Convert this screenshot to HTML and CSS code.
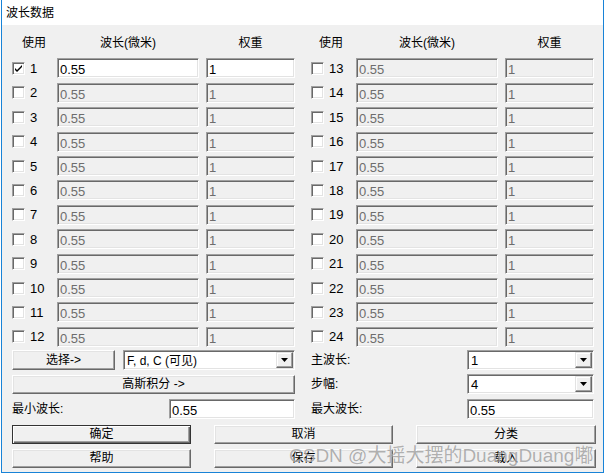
FILE: index.html
```html
<!DOCTYPE html>
<html>
<head>
<meta charset="utf-8">
<link rel="stylesheet" href="styles.css">
</head>
<body>
<div class="window">
  <div class="titlebar">波长数据</div>
  <div class="content">
    <div class="table">
      <div class="half">
        <div class="hdr hdr-use">使用</div><div class="hdr">波长(微米)</div><div class="hdr">权重</div>
        <div class="chk-cell"><span class="chk checked"><svg width="9" height="9" viewBox="0 0 9 9"><path d="M1 4 L3 6 L8 1 L8 3 L3 8 L1 6 Z" fill="#000"/></svg></span><span class="num">1</span></div><div class="field">0.55</div><div class="field">1</div>
        <div class="chk-cell"><span class="chk"></span><span class="num">2</span></div><div class="field dis">0.55</div><div class="field dis">1</div>
        <div class="chk-cell"><span class="chk"></span><span class="num">3</span></div><div class="field dis">0.55</div><div class="field dis">1</div>
        <div class="chk-cell"><span class="chk"></span><span class="num">4</span></div><div class="field dis">0.55</div><div class="field dis">1</div>
        <div class="chk-cell"><span class="chk"></span><span class="num">5</span></div><div class="field dis">0.55</div><div class="field dis">1</div>
        <div class="chk-cell"><span class="chk"></span><span class="num">6</span></div><div class="field dis">0.55</div><div class="field dis">1</div>
        <div class="chk-cell"><span class="chk"></span><span class="num">7</span></div><div class="field dis">0.55</div><div class="field dis">1</div>
        <div class="chk-cell"><span class="chk"></span><span class="num">8</span></div><div class="field dis">0.55</div><div class="field dis">1</div>
        <div class="chk-cell"><span class="chk"></span><span class="num">9</span></div><div class="field dis">0.55</div><div class="field dis">1</div>
        <div class="chk-cell"><span class="chk"></span><span class="num">10</span></div><div class="field dis">0.55</div><div class="field dis">1</div>
        <div class="chk-cell"><span class="chk"></span><span class="num">11</span></div><div class="field dis">0.55</div><div class="field dis">1</div>
        <div class="chk-cell"><span class="chk"></span><span class="num">12</span></div><div class="field dis">0.55</div><div class="field dis">1</div>
      </div>
      <div class="half">
        <div class="hdr hdr-use r">使用</div><div class="hdr">波长(微米)</div><div class="hdr">权重</div>
        <div class="chk-cell"><span class="chk"></span><span class="num">13</span></div><div class="field dis">0.55</div><div class="field dis">1</div>
        <div class="chk-cell"><span class="chk"></span><span class="num">14</span></div><div class="field dis">0.55</div><div class="field dis">1</div>
        <div class="chk-cell"><span class="chk"></span><span class="num">15</span></div><div class="field dis">0.55</div><div class="field dis">1</div>
        <div class="chk-cell"><span class="chk"></span><span class="num">16</span></div><div class="field dis">0.55</div><div class="field dis">1</div>
        <div class="chk-cell"><span class="chk"></span><span class="num">17</span></div><div class="field dis">0.55</div><div class="field dis">1</div>
        <div class="chk-cell"><span class="chk"></span><span class="num">18</span></div><div class="field dis">0.55</div><div class="field dis">1</div>
        <div class="chk-cell"><span class="chk"></span><span class="num">19</span></div><div class="field dis">0.55</div><div class="field dis">1</div>
        <div class="chk-cell"><span class="chk"></span><span class="num">20</span></div><div class="field dis">0.55</div><div class="field dis">1</div>
        <div class="chk-cell"><span class="chk"></span><span class="num">21</span></div><div class="field dis">0.55</div><div class="field dis">1</div>
        <div class="chk-cell"><span class="chk"></span><span class="num">22</span></div><div class="field dis">0.55</div><div class="field dis">1</div>
        <div class="chk-cell"><span class="chk"></span><span class="num">23</span></div><div class="field dis">0.55</div><div class="field dis">1</div>
        <div class="chk-cell"><span class="chk"></span><span class="num">24</span></div><div class="field dis">0.55</div><div class="field dis">1</div>
      </div>
    </div>

    <div class="controls">
      <div class="ctrl-col">
        <div class="ctrl-row row-a">
          <div class="btn btn-select">选择-&gt;</div>
          <div class="combo"><span class="combo-text">F, d, C (可见)</span><span class="drop"><svg width="7" height="4" viewBox="0 0 7 4"><path d="M0 0 H7 L3.5 4 Z" fill="#000"/></svg></span></div>
        </div>
        <div class="ctrl-row row-b">
          <div class="btn btn-full">高斯积分 -&gt;</div>
        </div>
        <div class="ctrl-row row-c">
          <span class="lbl">最小波长:</span>
          <div class="field small">0.55</div>
        </div>
      </div>
      <div class="ctrl-col">
        <div class="ctrl-row row-a">
          <span class="lbl">主波长:</span>
          <div class="combo small"><span class="combo-text">1</span><span class="drop"><svg width="7" height="4" viewBox="0 0 7 4"><path d="M0 0 H7 L3.5 4 Z" fill="#000"/></svg></span></div>
        </div>
        <div class="ctrl-row row-b">
          <span class="lbl">步幅:</span>
          <div class="combo small"><span class="combo-text">4</span><span class="drop"><svg width="7" height="4" viewBox="0 0 7 4"><path d="M0 0 H7 L3.5 4 Z" fill="#000"/></svg></span></div>
        </div>
        <div class="ctrl-row row-c">
          <span class="lbl">最大波长:</span>
          <div class="field small">0.55</div>
        </div>
      </div>
    </div>

    <div class="buttons">
      <div class="btn default">确定</div>
      <div class="btn">取消</div>
      <div class="btn">分类</div>
      <div class="btn">帮助</div>
      <div class="btn">保存</div>
      <div class="btn">载入</div>
    </div>
  </div>
  <div class="watermark">CSDN @大摇大摆的DuangDuang嘟</div>
</div>
</body>
</html>
```

FILE: styles.css
```css
* { box-sizing: border-box; }
body {
  margin: 0;
  background: #fff;
  font-family: "Liberation Sans", "Noto Sans CJK SC", sans-serif;
  font-size: 12px;
  color: #000;
}
.window {
  position: relative;
  margin-left: 1px;
  width: 603px;
  height: 473px;
  border: 1px solid #1883d7;
  border-top: none;
  background: #f0f0f0;
  overflow: hidden;
}
.titlebar {
  height: 25px;
  background: #fff;
  padding-left: 4px;
  line-height: 26px;
  font-size: 12px;
}
.content {
  padding-left: 10px;
}
.table {
  display: flex;
  gap: 16px;
}
.half {
  display: grid;
  grid-template-columns: 38px 142px 89px;
  column-gap: 7px;
  grid-template-rows: 29.1px repeat(12, 20px);
  row-gap: 4.4px;
}
.hdr {
  text-align: center;
  padding-top: 11px;
  line-height: 14px;
}
.hdr-use { text-align: left; padding-left: 10px; }
.hdr-use.r { padding-left: 8px; }
.chk-cell {
  display: flex;
  align-items: center;
  height: 20px;
}
.chk {
  width: 13px;
  height: 13px;
  background: #fff;
  border-top: 1px solid #a0a0a0;
  border-left: 1px solid #a0a0a0;
  border-right: 1px solid #fff;
  border-bottom: 1px solid #fff;
  box-shadow: inset 1px 1px 0 #696969, inset -1px -1px 0 #e3e3e3;
  display: flex;
  align-items: center;
  justify-content: center;
  margin-right: 5px;
}
.chk svg { display: block; }
.num { font-size: 13px; line-height: 14px; padding-top: 1px; }
.field {
  height: 20px;
  background: #fff;
  border-top: 1px solid #a0a0a0;
  border-left: 1px solid #a0a0a0;
  border-right: 1px solid #fff;
  border-bottom: 1px solid #fff;
  box-shadow: inset 1px 1px 0 #696969, inset -1px -1px 0 #e3e3e3;
  padding: 3px 0 0 2px;
  font-size: 13px;
  line-height: 15px;
  white-space: nowrap;
}
.field.dis {
  background: #f0f0f0;
  color: #6d6d6d;
}
.controls {
  display: flex;
  gap: 16px;
  margin-top: 3px;
}
.ctrl-col {
  width: 283px;
  display: flex;
  flex-direction: column;
  gap: 5px;
}
.ctrl-row {
  display: flex;
  align-items: center;
}
.row-a { height: 20px; }
.row-b { height: 19px; }
.row-c { height: 20px; }
.lbl { flex: 1; line-height: 14px; }
.btn {
  height: 19px;
  background: #f0f0f0;
  border-top: 1px solid #fff;
  border-left: 1px solid #fff;
  border-right: 1px solid #696969;
  border-bottom: 1px solid #696969;
  box-shadow: inset -1px -1px 0 #a0a0a0, inset 1px 1px 0 #e3e3e3;
  display: flex;
  align-items: center;
  justify-content: center;
  line-height: 14px;
}
.btn-select { width: 103px; height: 20px; margin-right: 8px; }
.btn-full { width: 283px; }
.combo {
  flex: 1;
  height: 20px;
  background: #fff;
  border-top: 1px solid #a0a0a0;
  border-left: 1px solid #a0a0a0;
  border-right: 1px solid #fff;
  border-bottom: 1px solid #fff;
  box-shadow: inset 1px 1px 0 #696969, inset -1px -1px 0 #e3e3e3;
  display: flex;
  padding: 1px;
}
.combo.small { flex: none; width: 127px; }
.combo-text {
  flex: 1;
  padding: 2px 0 0 2px;
  font-size: 13px;
  line-height: 14px;
  white-space: nowrap;
}
.combo:not(.small) .combo-text { font-size: 12px; padding-top: 2px; }
.drop {
  width: 17px;
  background: #f0f0f0;
  border-top: 1px solid #e3e3e3;
  border-left: 1px solid #e3e3e3;
  border-right: 1px solid #696969;
  border-bottom: 1px solid #696969;
  box-shadow: inset -1px -1px 0 #a0a0a0, inset 1px 1px 0 #fff;
  display: flex;
  align-items: center;
  justify-content: center;
}
.drop svg { display: block; }
.field.small { width: 126px; }
.ctrl-col:last-child .field.small { width: 127px; }
.buttons {
  display: grid;
  grid-template-columns: 179px 179px 180px;
  column-gap: 23px;
  row-gap: 5px;
  margin-top: 6px;
}
.btn.default {
  border: 1px solid #333;
  box-shadow: inset 1px 1px 0 #fff, inset -1px -1px 0 #696969, inset -2px -2px 0 #a0a0a0;
}
.watermark {
  position: absolute;
  left: 287px;
  top: 445px;
  font-size: 19px;
  line-height: 22px;
  color: rgba(110, 110, 110, 0.55);
  text-shadow: 0 0 1px rgba(255, 255, 255, 0.8);
  white-space: nowrap;
}
```
